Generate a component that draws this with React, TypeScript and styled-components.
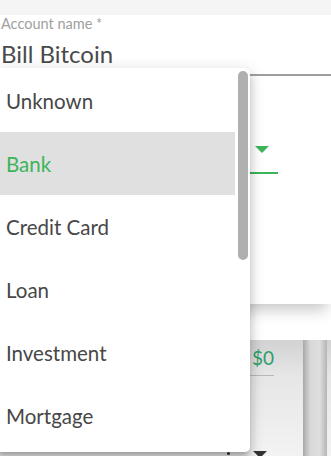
import React from "react";
import styled, { createGlobalStyle } from "styled-components";

const Global = createGlobalStyle`
  html, body { margin: 0; padding: 0; background: #ffffff; }
  body { font-family: Lato, "Open Sans", sans-serif; }
  * { box-sizing: border-box; }
`;

const Page = styled.div`
  position: relative;
  width: 331px;
  height: 456px;
  overflow: hidden;
  background: #ffffff;
  display: flex;
  flex-direction: column;
`;

const TopBand = styled.div`
  height: 15px;
  background: #f5f5f5;
  flex: none;
`;

const Card = styled.div`
  position: relative;
  z-index: 1;
  background: #ffffff;
  height: 289px;
  flex: none;
  box-shadow: 0 10px 14px -4px rgba(0, 0, 0, 0.22);
  padding-left: 1px;
`;

const Field = styled.div`
  display: flex;
  flex-direction: column;
  border-bottom: 2px solid #9e9e9e;
  height: 61px;
`;

const Label = styled.div`
  font-size: 14.5px;
  line-height: 18px;
  color: #a0a0a0;
`;

const Value = styled.div`
  font-size: 24px;
  line-height: 30px;
  margin-top: 6px;
  color: #4a4a4a;
`;

const SelectField = styled.div`
  position: relative;
  width: 277px;
  height: 98px;
  border-bottom: 2px solid #3cb55a;
`;

const Caret = styled.div`
  position: absolute;
  right: 9px;
  top: 70px;
  width: 0;
  height: 0;
  border-left: 7px solid transparent;
  border-right: 7px solid transparent;
  border-top: 7px solid #3cb55a;
`;

const Spacer = styled.div`
  height: 36px;
  flex: none;
`;

const Lower = styled.div`
  flex: 1;
  display: flex;
  background: linear-gradient(#d2d2d2, #e6e6e6 30%, #f3f3f3);
`;

const AmountCol = styled.div`
  position: relative;
  width: 303px;
  flex: none;
  padding-top: 6px;
`;

const Amount = styled.div`
  margin-left: auto;
  width: 58px;
  margin-right: 29px;
  text-align: right;
  font-size: 19px;
  line-height: 24px;
  color: #2e9e6a;
  border-bottom: 1px solid #b8b8b8;
  padding-bottom: 5px;
`;

const BottomCaret = styled.div`
  position: absolute;
  left: 253px;
  bottom: -2px;
  width: 0;
  height: 0;
  border-left: 7px solid transparent;
  border-right: 7px solid transparent;
  border-top: 7px solid #333;
`;

const Dot = styled.div`
  position: absolute;
  left: 227px;
  bottom: 1px;
  width: 3px;
  height: 3px;
  border-radius: 50%;
  background: #333;
`;

const Rail = styled.div`
  width: 24px;
  flex: none;
  background: linear-gradient(90deg, #a8a8a8, #d8d8d8 30%, #dedede 70%, #b4b4b4);
`;

const Menu = styled.div`
  position: absolute;
  z-index: 5;
  top: 68px;
  left: -4px;
  width: 254px;
  height: 384px;
  background: #ffffff;
  border-radius: 5px;
  overflow: hidden;
  box-shadow: 0 5px 5px -3px rgba(0, 0, 0, 0.2), 0 8px 10px 1px rgba(0, 0, 0, 0.14),
    0 3px 14px 2px rgba(0, 0, 0, 0.12);
`;

const List = styled.ul`
  list-style: none;
  margin: 0;
  padding: 1px 0 0;
`;

const Item = styled.li<{ $selected?: boolean }>`
  width: 239px;
  height: 63px;
  display: flex;
  align-items: center;
  padding-left: 10px;
  font-size: 20.5px;
  color: ${(p) => (p.$selected ? "#3cb55a" : "#474747")};
  background: ${(p) => (p.$selected ? "#e0e0e0" : "transparent")};
`;

const Thumb = styled.div`
  position: absolute;
  left: 242px;
  top: 3px;
  width: 10px;
  height: 189px;
  border-radius: 5px;
  background: #b0b0b0;
`;

const options = ["Unknown", "Bank", "Credit Card", "Loan", "Investment", "Mortgage"];

export default function App() {
  return (
    <>
      <Global />
      <Page>
        <TopBand />
        <Card>
          <Field>
            <Label>Account name *</Label>
            <Value>Bill Bitcoin</Value>
          </Field>
          <SelectField>
            <Caret />
          </SelectField>
        </Card>
        <Spacer />
        <Lower>
          <AmountCol>
            <Amount>$0</Amount>
            <Dot />
            <BottomCaret />
          </AmountCol>
          <Rail />
        </Lower>
        <Menu>
          <List>
            {options.map((o) => (
              <Item key={o} $selected={o === "Bank"}>
                {o}
              </Item>
            ))}
          </List>
          <Thumb />
        </Menu>
      </Page>
    </>
  );
}
